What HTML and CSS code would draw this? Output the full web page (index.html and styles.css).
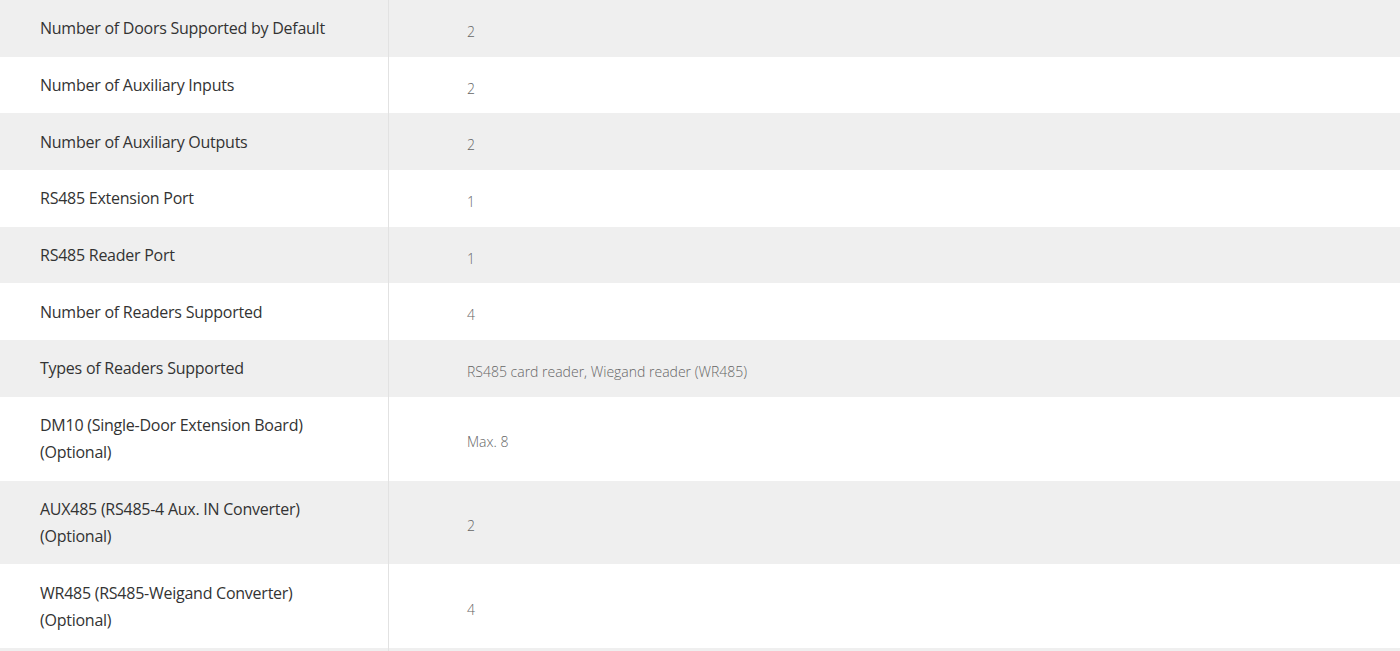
FILE: index.html
```html
<!DOCTYPE html>
<html>
<head>
<meta charset="utf-8">
<link rel="stylesheet" href="styles.css">
</head>
<body>
<div class="spec">
  <div class="row"><div class="label">Number of Doors Supported by Default</div><div class="value">2</div></div>
  <div class="row"><div class="label">Number of Auxiliary Inputs</div><div class="value">2</div></div>
  <div class="row"><div class="label">Number of Auxiliary Outputs</div><div class="value">2</div></div>
  <div class="row"><div class="label">RS485 Extension Port</div><div class="value">1</div></div>
  <div class="row"><div class="label">RS485 Reader Port</div><div class="value">1</div></div>
  <div class="row"><div class="label">Number of Readers Supported</div><div class="value">4</div></div>
  <div class="row"><div class="label">Types of Readers Supported</div><div class="value">RS485 card reader, Wiegand reader (WR485)</div></div>
  <div class="row"><div class="label">DM10 (Single-Door Extension Board)<br>(Optional)</div><div class="value">Max. 8</div></div>
  <div class="row"><div class="label">AUX485 (RS485-4 Aux. IN Converter)<br>(Optional)</div><div class="value">2</div></div>
  <div class="row"><div class="label">WR485 (RS485-Weigand Converter)<br>(Optional)</div><div class="value">4</div></div>
  <div class="row"><div class="label">&nbsp;</div><div class="value">&nbsp;</div></div>
</div>
</body>
</html>
```
FILE: styles.css
```css
html, body {
  margin: 0;
  padding: 0;
  background: #ffffff;
}
.spec {
  display: flex;
  flex-direction: column;
}
.row {
  display: grid;
  grid-template-columns: 388px 1fr;
  background: #ffffff;
}
.row:nth-child(odd) {
  background: #efefef;
}
.label {
  padding: 15.35px 0 14.35px 40px;
  font-family: "Open Sans", "Liberation Sans", sans-serif;
  font-size: 16px;
  letter-spacing: -0.25px;
  line-height: 27px;
  color: #333333;
}
.value {
  border-left: 1px solid #e2e2e2;
  padding: 6px 0 0 78px;
  display: flex;
  align-items: center;
  font-family: "Open Sans", "Liberation Sans", sans-serif;
  font-weight: 300;
  font-size: 14px;
  letter-spacing: 0;
  color: #666666;
}
```
